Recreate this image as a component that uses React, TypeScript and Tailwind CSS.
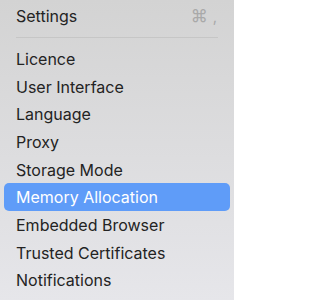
import React from "react";

const items = [
  "Licence",
  "User Interface",
  "Language",
  "Proxy",
  "Storage Mode",
  "Memory Allocation",
  "Embedded Browser",
  "Trusted Certificates",
  "Notifications",
];

export default function App() {
  return (
    <div
      className="w-[234px] h-[300px] overflow-hidden px-1 bg-gradient-to-b from-[#d3d3d3] to-[#e6e6ea] text-[16px] text-[#232323] antialiased"
      style={{ fontFamily: "Inter, 'Noto Sans', sans-serif" }}
    >
      <div className="h-[32px] flex items-center justify-between px-3">
        <span>Settings</span>
        <span className="text-[#a9a9a9] flex items-center gap-[5px] pr-[1px]">
          <span className="text-[17px] leading-none">⌘</span>
          <span className="text-[15px] leading-none">,</span>
        </span>
      </div>
      <div className="mx-3 mt-[5px] mb-[7px] h-px bg-[#c6c6c6]" />
      <div className="flex flex-col">
        {items.map((it) => (
          <div
            key={it}
            className={
              it === "Memory Allocation"
                ? "h-[27.7px] flex items-center px-3 rounded-[5px] bg-[#5f9cf8] text-white"
                : "h-[27.7px] flex items-center px-3"
            }
          >
            {it}
          </div>
        ))}
      </div>
    </div>
  );
}
